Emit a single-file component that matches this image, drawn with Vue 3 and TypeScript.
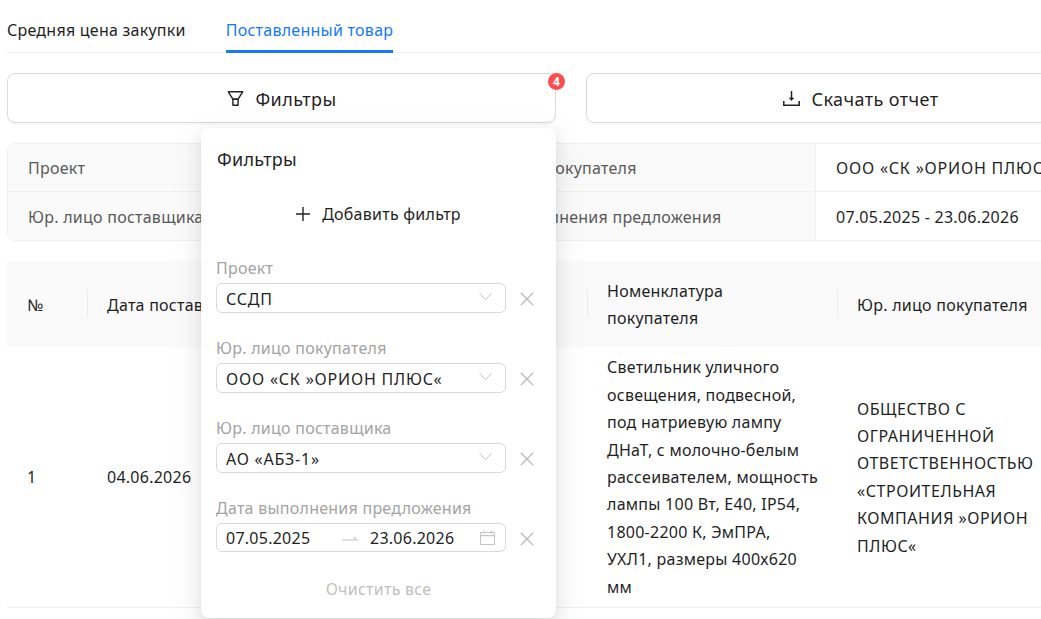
<script setup lang="ts">
interface Filter {
  label: string
  value: string
}

const filters: Filter[] = [
  { label: 'Проект', value: 'ССДП' },
  { label: 'Юр. лицо покупателя', value: 'ООО «СК »ОРИОН ПЛЮС«' },
  { label: 'Юр. лицо поставщика', value: 'АО «АБЗ-1»' },
]

const summary = [
  ['Проект', 'ССДП', 'Юр. лицо покупателя', 'ООО «СК »ОРИОН ПЛЮС«'],
  ['Юр. лицо поставщика', 'АО «АБЗ-1»', 'Дата выполнения предложения', '07.05.2025 - 23.06.2026'],
]

const columns = ['№', 'Дата поставки', 'Номенклатура поставщика', 'Номенклатура покупателя', 'Юр. лицо покупателя']

// nbsp after "УХЛ1," keeps the line break where the design has it
const row = [
  '1',
  '04.06.2026',
  'Светильник ДНаТ, мощность',
  'Светильник уличного освещения, подвесной, под натриевую лампу ДНаТ, с молочно-белым рассеивателем, мощность лампы 100 Вт, Е40, IP54, 1800-2200 К, ЭмПРА, УХЛ1,\u00a0размеры 400х620 мм',
  'ОБЩЕСТВО С ОГРАНИЧЕННОЙ ОТВЕТСТВЕННОСТЬЮ «СТРОИТЕЛЬНАЯ КОМПАНИЯ »ОРИОН ПЛЮС«',
]
</script>

<template>
  <div class="page">
    <div class="content">
      <div class="tabs">
        <div class="tab">Средняя цена закупки</div>
        <div class="tab active">Поставленный товар</div>
      </div>

      <div class="actions">
        <button class="btn" type="button">
          <svg class="btn-icon" viewBox="0 0 16 15" fill="none" stroke="#222" stroke-width="1.4" stroke-linejoin="round">
            <path d="M.8.8h14.400L10.600 8.200H5.400z" />
            <path d="M5.400 8.200h5.200v6H5.400z" />
          </svg>
          Фильтры
          <span class="badge">4</span>
        </button>
        <button class="btn" type="button">
          <svg class="btn-icon" viewBox="0 0 17 15" fill="none" stroke="#222" stroke-width="1.5">
            <path d="M8.500 0v8" />
            <path d="M5.800 6.800h5.400L8.500 10z" fill="#222" stroke="none" />
            <path d="M.8 10v4.200h15.400V10" />
          </svg>
          Скачать отчет
        </button>
      </div>

      <div class="summary">
        <div v-for="(line, i) in summary" :key="i" class="summary-row">
          <div
            v-for="(text, j) in line"
            :key="j"
            class="summary-cell"
            :class="j % 2 === 0 ? 'summary-label' : 'summary-value'"
          >
            {{ text }}
          </div>
        </div>
      </div>

      <table class="grid">
        <colgroup>
          <col class="col-num" />
          <col class="col-wide" />
          <col class="col-wide" />
          <col class="col-wide" />
          <col />
        </colgroup>
        <thead>
          <tr>
            <th v-for="col in columns" :key="col">{{ col }}</th>
          </tr>
        </thead>
        <tbody>
          <tr>
            <td v-for="(cell, i) in row" :key="i">{{ cell }}</td>
          </tr>
        </tbody>
      </table>
    </div>

    <div class="panel">
      <div class="panel-title">Фильтры</div>
      <div class="add-filter">
        <svg class="plus" viewBox="0 0 14 14" stroke="#222" stroke-width="1.4">
          <path d="M7 0v14M0 7h14" />
        </svg>
        Добавить фильтр
      </div>

      <div class="fields">
        <div v-for="f in filters" :key="f.label" class="field">
          <div class="field-label">{{ f.label }}</div>
          <div class="field-row">
            <div class="input">
              <span class="input-text">{{ f.value }}</span>
              <svg class="chevron" viewBox="0 0 14 9" fill="none" stroke="#c4c4c4" stroke-width="1">
                <path d="M.5.500 7 8.300 13.500.5" />
              </svg>
            </div>
            <svg class="clear" viewBox="0 0 14 14" stroke="#bdbdbd" stroke-width="1.4">
              <path d="M.8.800l12.400 12.400M13.200.800.8 13.200" />
            </svg>
          </div>
        </div>

        <div class="field">
          <div class="field-label">Дата выполнения предложения</div>
          <div class="field-row">
            <div class="input date">
              <span class="date-from">07.05.2025</span>
              <svg class="arrow" viewBox="0 0 16 5" fill="none" stroke="#c4c4c4" stroke-width="1.1">
                <path d="M0 4h15L11.500 .8" />
              </svg>
              <span class="date-to">23.06.2026</span>
              <svg class="calendar" viewBox="0 0 16 16" fill="none" stroke="#c4c4c4" stroke-width="1.1">
                <path d="M.6 2.600h14.800v12.800H.6zM.6 6h14.800M4 .5v3.500M12 .5v3.500" />
              </svg>
            </div>
            <svg class="clear" viewBox="0 0 14 14" stroke="#bdbdbd" stroke-width="1.4">
              <path d="M.8.800l12.400 12.400M13.200.800.8 13.200" />
            </svg>
          </div>
        </div>
      </div>

      <div class="clear-all">Очистить все</div>
    </div>
  </div>
</template>

<style>
html,
body {
  margin: 0;
  background: #fff;
}
</style>

<style scoped>
.page {
  position: relative;
  width: 1041px;
  height: 619px;
  overflow: hidden;
  background: #fff;
  font-family: "Noto Sans", "Liberation Sans", sans-serif;
  font-size: 16px;
  letter-spacing: 0.25px;
  color: #1f1f1f;
}
.content {
  width: 1128px;
  margin-left: 7px;
}
.tabs {
  display: flex;
  gap: 40px;
  height: 52px;
  border-bottom: 1px solid #f0f0f0;
}
.tab {
  height: 53px;
  line-height: 60px;
  box-sizing: border-box;
}
.tab.active {
  color: #1677ff;
  border-bottom: 3px solid #1677ff;
}
.actions {
  display: grid;
  grid-template-columns: 549px 549px;
  gap: 30px;
  margin-top: 20px;
}
.btn {
  position: relative;
  display: flex;
  align-items: center;
  justify-content: center;
  gap: 12px;
  height: 50px;
  padding: 1px 0 0;
  border: 1px solid #d9d9d9;
  border-radius: 8px;
  background: #fff;
  font: inherit;
  font-size: 18px;
  letter-spacing: 0.4px;
  color: inherit;
  box-shadow: 0 2px 0 rgba(0, 0, 0, 0.02);
}
.btn-icon {
  width: 17px;
  height: 15px;
}
.badge {
  position: absolute;
  top: -1px;
  right: -10px;
  width: 17px;
  height: 17px;
  border-radius: 50%;
  background: #ff4d4f;
  color: #fff;
  font-size: 12px;
  font-weight: 700;
  letter-spacing: 0;
  line-height: 17px;
  text-align: center;
}
.summary {
  margin-top: 20px;
  border: 1px solid #f0f0f0;
  border-radius: 8px;
  overflow: hidden;
}
.summary-row {
  display: grid;
  grid-template-columns: 219px 219px 369px 1fr;
  height: 47px;
  box-sizing: border-box;
}
.summary-row + .summary-row {
  height: 49px;
  border-top: 1px solid #f0f0f0;
}
.summary-row:first-child .summary-value {
  letter-spacing: 0.8px;
}
.summary-cell {
  display: flex;
  align-items: center;
  padding: 1px 0 0 20px;
  white-space: nowrap;
}
.summary-label {
  background: #fafafa;
  color: #595959;
}
.summary-value {
  border-left: 1px solid #f0f0f0;
  border-right: 1px solid #f0f0f0;
}
.summary-value:last-child {
  border-right: 0;
}
.grid {
  width: 1128px;
  margin-top: 20px;
  border-collapse: collapse;
  table-layout: fixed;
}
.col-num {
  width: 80px;
}
.col-wide {
  width: 250px;
}
.grid th {
  position: relative;
  height: 86px;
  padding: 2px 20px 0;
  background: #fafafa;
  font-weight: 400;
  line-height: 27px;
  text-align: left;
  box-sizing: border-box;
}
.grid th + th::before {
  content: "";
  position: absolute;
  left: 0;
  top: 28px;
  height: 28px;
  width: 1px;
  background: #ececec;
}
.grid th:last-child,
.grid td:last-child {
  padding-right: 68px;
}
.grid td {
  height: 260px;
  padding: 2px 20px 0;
  border-bottom: 1px solid #f0f0f0;
  line-height: 27.4px;
  box-sizing: border-box;
}
.grid td:nth-child(4) {
  padding-right: 14px;
}
.grid td:last-child {
  letter-spacing: 0.55px;
}
.panel {
  position: absolute;
  left: 201px;
  top: 128px;
  width: 355px;
  height: 490px;
  padding: 0 15px;
  box-sizing: border-box;
  background: #fff;
  border-radius: 8px;
  box-shadow: 0 6px 16px rgba(0, 0, 0, 0.08), 0 3px 6px -4px rgba(0, 0, 0, 0.12), 0 9px 28px 8px rgba(0, 0, 0, 0.05);
}
.panel-title {
  margin: 19px 0 0 1px;
  font-size: 18px;
  line-height: 24px;
}
.add-filter {
  display: flex;
  align-items: center;
  justify-content: center;
  gap: 12px;
  margin-top: 31px;
  height: 24px;
}
.plus {
  width: 14px;
  height: 14px;
}
.fields {
  display: flex;
  flex-direction: column;
  gap: 22px;
  margin-top: 29px;
}
.field-label {
  height: 28px;
  line-height: 26px;
  color: #a3a3a3;
}
.field-row {
  display: flex;
  align-items: center;
  gap: 14px;
}
.input {
  display: flex;
  align-items: center;
  justify-content: space-between;
  width: 290px;
  height: 30px;
  padding: 0 13px 0 9px;
  box-sizing: border-box;
  border: 1px solid #d9d9d9;
  border-radius: 6px;
}
.input-text,
.date-from,
.date-to {
  padding-top: 1px;
  white-space: nowrap;
}
.input-text {
  letter-spacing: 0.8px;
}
.chevron {
  width: 13px;
  height: 9px;
  margin-bottom: 3px;
}
.clear {
  width: 14px;
  height: 14px;
  margin-top: 2px;
}
.date {
  justify-content: flex-start;
  height: 29px;
  padding-right: 10px;
}
.date-from {
  width: 116px;
}
.arrow {
  width: 16px;
  height: 5px;
  margin-top: 2px;
}
.date-to {
  margin-left: 12px;
}
.calendar {
  width: 15px;
  height: 15px;
  margin-left: auto;
}
.clear-all {
  margin-top: 26px;
  text-align: center;
  color: #bfbfbf;
}
</style>
